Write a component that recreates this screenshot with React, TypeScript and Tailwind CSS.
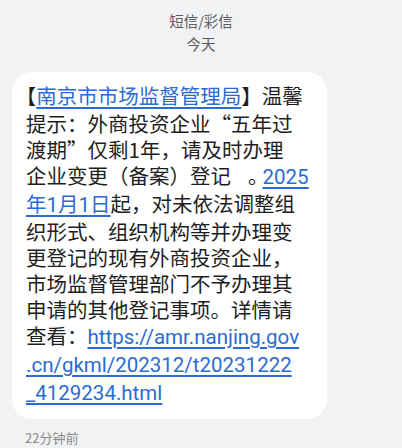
import React from "react";

const L = ({ children }: { children: React.ReactNode }) => (
  <span
    className="text-[#2a6bd6] underline decoration-[#2a6bd6] decoration-[1.5px] underline-offset-[3px]"
    style={{ fontFamily: 'Roboto, "Noto Sans CJK SC", sans-serif' }}
  >
    {children}
  </span>
);

export default function App() {
  return (
    <div
      className="w-[402px] h-[448px] bg-[#f1f2f4] overflow-hidden"
      style={{ fontFamily: '"Noto Sans CJK SC", "Noto Sans", sans-serif' }}
    >
      <div className="pt-[8.5px] flex flex-col items-center text-[14.5px] leading-[23px] text-[#5a5a5a]">
        <div>短信/彩信</div>
        <div>今天</div>
      </div>
      <div className="mt-[17.5px] ml-[12px] w-[315px] bg-white rounded-[20px] pl-[14px] pr-[14px] pt-[10px] pb-[13px]">
        <p className="text-[20.5px] leading-[26px] text-[#1e1e1e] whitespace-nowrap">
          <span className="[font-feature-settings:'halt']">【</span>
          <L>南京市市场监督管理局</L>】温馨
          <br />
          提示：外商投资企业“五年过
          <br />
          渡期”仅剩1年，请及时办理
          <br />
          企业变更（备案）登记<span className="ml-[17px] mr-[-6px]">。</span><L>2025</L>
          <br />
          <L>年1月1日</L>起，对未依法调整组
          <br />
          织形式、组织机构等并办理变
          <br />
          更登记的现有外商投资企业，
          <br />
          市场监督管理部门不予办理其
          <br />
          申请的其他登记事项。详情请
          <br />
          查看：<L>https://amr.nanjing.gov</L>
          <br />
          <L>.cn/gkml/202312/t20231222</L>
          <br />
          <L>_4129234.html</L>
        </p>
      </div>
      <div className="mt-[10px] ml-[25px] text-[13px] leading-[18px] text-[#8a8a8a]">22分钟前</div>
    </div>
  );
}
